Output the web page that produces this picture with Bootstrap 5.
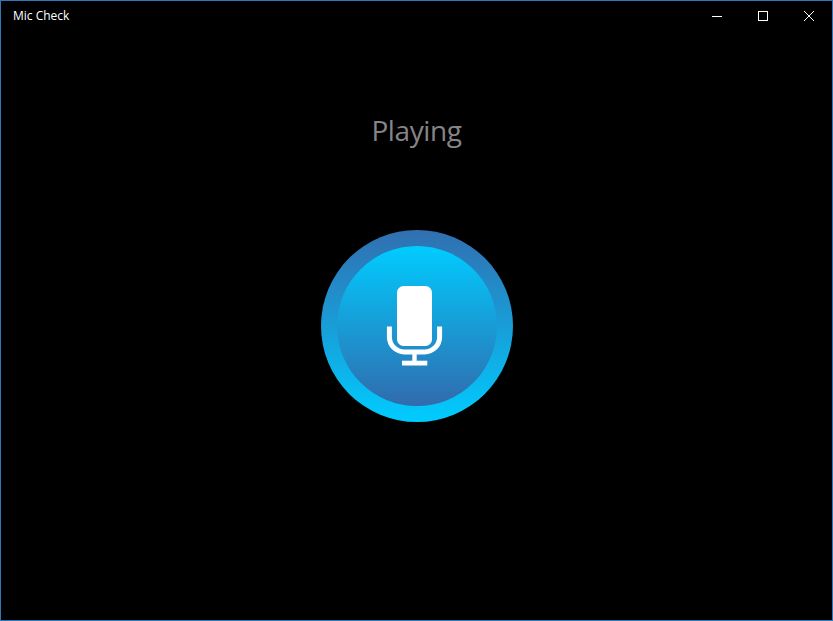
<!DOCTYPE html>
<html lang="en">
<head>
    <meta charset="UTF-8">
    <meta name="viewport" content="width=device-width, initial-scale=1.0">
    <title>Mic Check</title>
    <link href="https://cdn.jsdelivr.net/npm/bootstrap@5.3.2/dist/css/bootstrap.min.css" rel="stylesheet">
    <script src="https://cdn.jsdelivr.net/npm/bootstrap@5.3.2/dist/js/bootstrap.bundle.min.js"></script>
    <style>
        html, body {
            height: 100%;
            background-color: #000;
            overflow: hidden;
        }
        .app-window {
            height: 621px;
            border: 1px solid #2b78bd;
            background-color: #000;
            font-family: "Open Sans", "Noto Sans", sans-serif;
        }
        .title-bar {
            height: 30px;
            padding-left: 12px;
        }
        .app-title {
            font-size: 12px;
            line-height: 30px;
            color: #fff;
        }
        .win-btn {
            width: 46px;
            height: 30px;
        }
        .status-text {
            margin-top: 80px;
            height: 40px;
            font-size: 28px;
            line-height: 38px;
            letter-spacing: -0.4px;
            color: #858585;
        }
        .mic-ring {
            width: 192px;
            height: 192px;
            margin-top: 79px;
            background: linear-gradient(to bottom, #316fb0, #00ccff);
        }
        .mic-face {
            width: 160px;
            height: 160px;
            background: linear-gradient(to bottom, #00ccff, #316bad);
        }
    </style>
</head>
<body>
    <div class="app-window d-flex flex-column">
        <div class="title-bar d-flex align-items-center justify-content-between">
            <span class="app-title">Mic Check</span>
            <div class="d-flex">
                <div class="win-btn d-flex align-items-center justify-content-center">
                    <svg width="10" height="10" viewBox="0 0 10 10"><path d="M0 5.5h10" stroke="#fff" stroke-width="1" fill="none"/></svg>
                </div>
                <div class="win-btn d-flex align-items-center justify-content-center">
                    <svg width="10" height="10" viewBox="0 0 10 10"><rect x=".5" y=".5" width="9" height="9" stroke="#fff" stroke-width="1" fill="none"/></svg>
                </div>
                <div class="win-btn d-flex align-items-center justify-content-center">
                    <svg width="10" height="10" viewBox="0 0 10 10"><path d="M0 0l10 10M10 0L0 10" stroke="#fff" stroke-width="1" fill="none"/></svg>
                </div>
            </div>
        </div>
        <div class="status-text text-center">Playing</div>
        <div class="mic-ring rounded-circle d-flex align-items-center justify-content-center align-self-center">
            <div class="mic-face rounded-circle d-flex align-items-center justify-content-center">
                <svg width="160" height="160" viewBox="0 0 160 160">
                    <rect x="60" y="40" width="35" height="60" rx="6.500" fill="#fff"/>
                    <path d="M52.400 80.500V91a15 15 0 0 0 15 15h20.200a15 15 0 0 0 15-15V80.500" stroke="#fff" stroke-width="5" fill="none"/>
                    <path d="M77.500 108v7" stroke="#fff" stroke-width="4.400" fill="none"/>
                    <rect x="65" y="114.700" width="25.300" height="4.800" fill="#fff"/>
                </svg>
            </div>
        </div>
    </div>
</body>
</html>
